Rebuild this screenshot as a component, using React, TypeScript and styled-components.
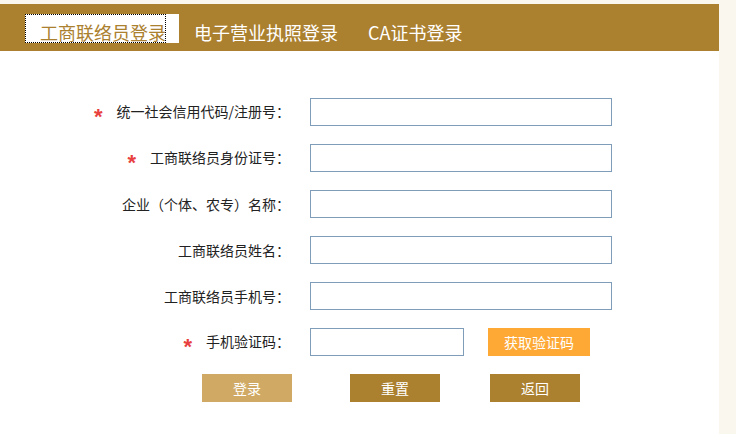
import React from "react";
import styled, { createGlobalStyle } from "styled-components";

const GlobalStyle = createGlobalStyle`
    html, body {
        margin: 0;
        padding: 0;
        background: #faf7ef;
        font-family: "Microsoft YaHei", "Noto Sans CJK SC", sans-serif;
    }
`;

const Page = styled.div`
    width: 719px;
    padding-top: 4px;
`;

const TabBar = styled.ul`
    display: flex;
    height: 47px;
    margin: 0;
    padding: 10px 0 0 25px;
    box-sizing: border-box;
    list-style: none;
    background: #ab802f;
`;

const Tab = styled.li<{ $active?: boolean }>`
    height: 29px;
    padding: 8px ${(p) => (p.$active ? "13px" : "15px")} 0 0;
    box-sizing: border-box;
    background: ${(p) => (p.$active ? "#fff" : "transparent")};
    font-size: 18px;
    line-height: 21px;
    color: ${(p) => (p.$active ? "#ab802f" : "#fff")};
    white-space: nowrap;
`;

const TabLink = styled.a<{ $active?: boolean }>`
    display: block;
    height: 29px;
    margin-top: -8px;
    padding: 8px 0 0 15px;
    box-sizing: border-box;
    outline: ${(p) => (p.$active ? "1px dotted #000" : "none")};
    outline-offset: -1px;
`;

const Panel = styled.div`
    background: #fff;
    height: 383px;
    padding-top: 47px;
    box-sizing: border-box;
`;

const Form = styled.div`
    display: grid;
    grid-template-columns: 290px auto;
    column-gap: 20px;
    row-gap: 18px;
    align-items: center;
`;

const Label = styled.label`
    text-align: right;
    font-size: 14px;
    color: #222;
    white-space: nowrap;
`;

const Star = styled.span`
    display: inline-block;
    margin-right: 14px;
    font-family: "Liberation Sans", sans-serif;
    font-size: 22px;
    font-weight: bold;
    line-height: 14px;
    color: #e8403e;
    vertical-align: -7px;
`;

const Field = styled.div`
    display: flex;
    align-items: center;
`;

const Input = styled.input<{ $w: number }>`
    width: ${(p) => p.$w}px;
    height: 28px;
    margin: 0;
    padding: 0 4px;
    box-sizing: border-box;
    border: 1px solid #7f9db9;
    outline: none;
    background: #fff;
`;

const CodeButton = styled.button`
    width: 102px;
    height: 28px;
    margin-left: 24px;
    border: none;
    background: #fea935;
    color: #fff;
    font-family: inherit;
    font-size: 14px;
    padding: 0;
`;

const Actions = styled.div`
    display: flex;
    padding: 18px 0 0 202px;
`;

const ActionButton = styled.button<{ $light?: boolean; $gap?: number }>`
    width: 90px;
    height: 28px;
    margin-left: ${(p) => p.$gap ?? 0}px;
    padding: 0;
    border: none;
    background: ${(p) => (p.$light ? "#d0aa64" : "#ab802f")};
    color: #fff;
    font-family: inherit;
    font-size: 14px;
`;

const rows = [
    { label: "统一社会信用代码/注册号：", required: true },
    { label: "工商联络员身份证号：", required: true },
    { label: "企业（个体、农专）名称：", required: false },
    { label: "工商联络员姓名：", required: false },
    { label: "工商联络员手机号：", required: false }
];

const tabs = ["工商联络员登录", "电子营业执照登录", "CA证书登录"];

const App: React.FC = () => {
    return (
        <Page>
            <GlobalStyle />
            <TabBar>
                {tabs.map((t, i) => (
                    <Tab key={t} $active={i === 0}>
                        <TabLink $active={i === 0}>{t}</TabLink>
                    </Tab>
                ))}
            </TabBar>
            <Panel>
                <Form>
                    {rows.map((r) => (
                        <React.Fragment key={r.label}>
                            <Label>
                                {r.required && <Star>*</Star>}
                                {r.label}
                            </Label>
                            <Field>
                                <Input $w={302} />
                            </Field>
                        </React.Fragment>
                    ))}
                    <Label>
                        <Star>*</Star>
                        手机验证码：
                    </Label>
                    <Field>
                        <Input $w={154} />
                        <CodeButton>获取验证码</CodeButton>
                    </Field>
                </Form>
                <Actions>
                    <ActionButton $light>登录</ActionButton>
                    <ActionButton $gap={58}>重置</ActionButton>
                    <ActionButton $gap={50}>返回</ActionButton>
                </Actions>
            </Panel>
        </Page>
    );
};

export default App;
